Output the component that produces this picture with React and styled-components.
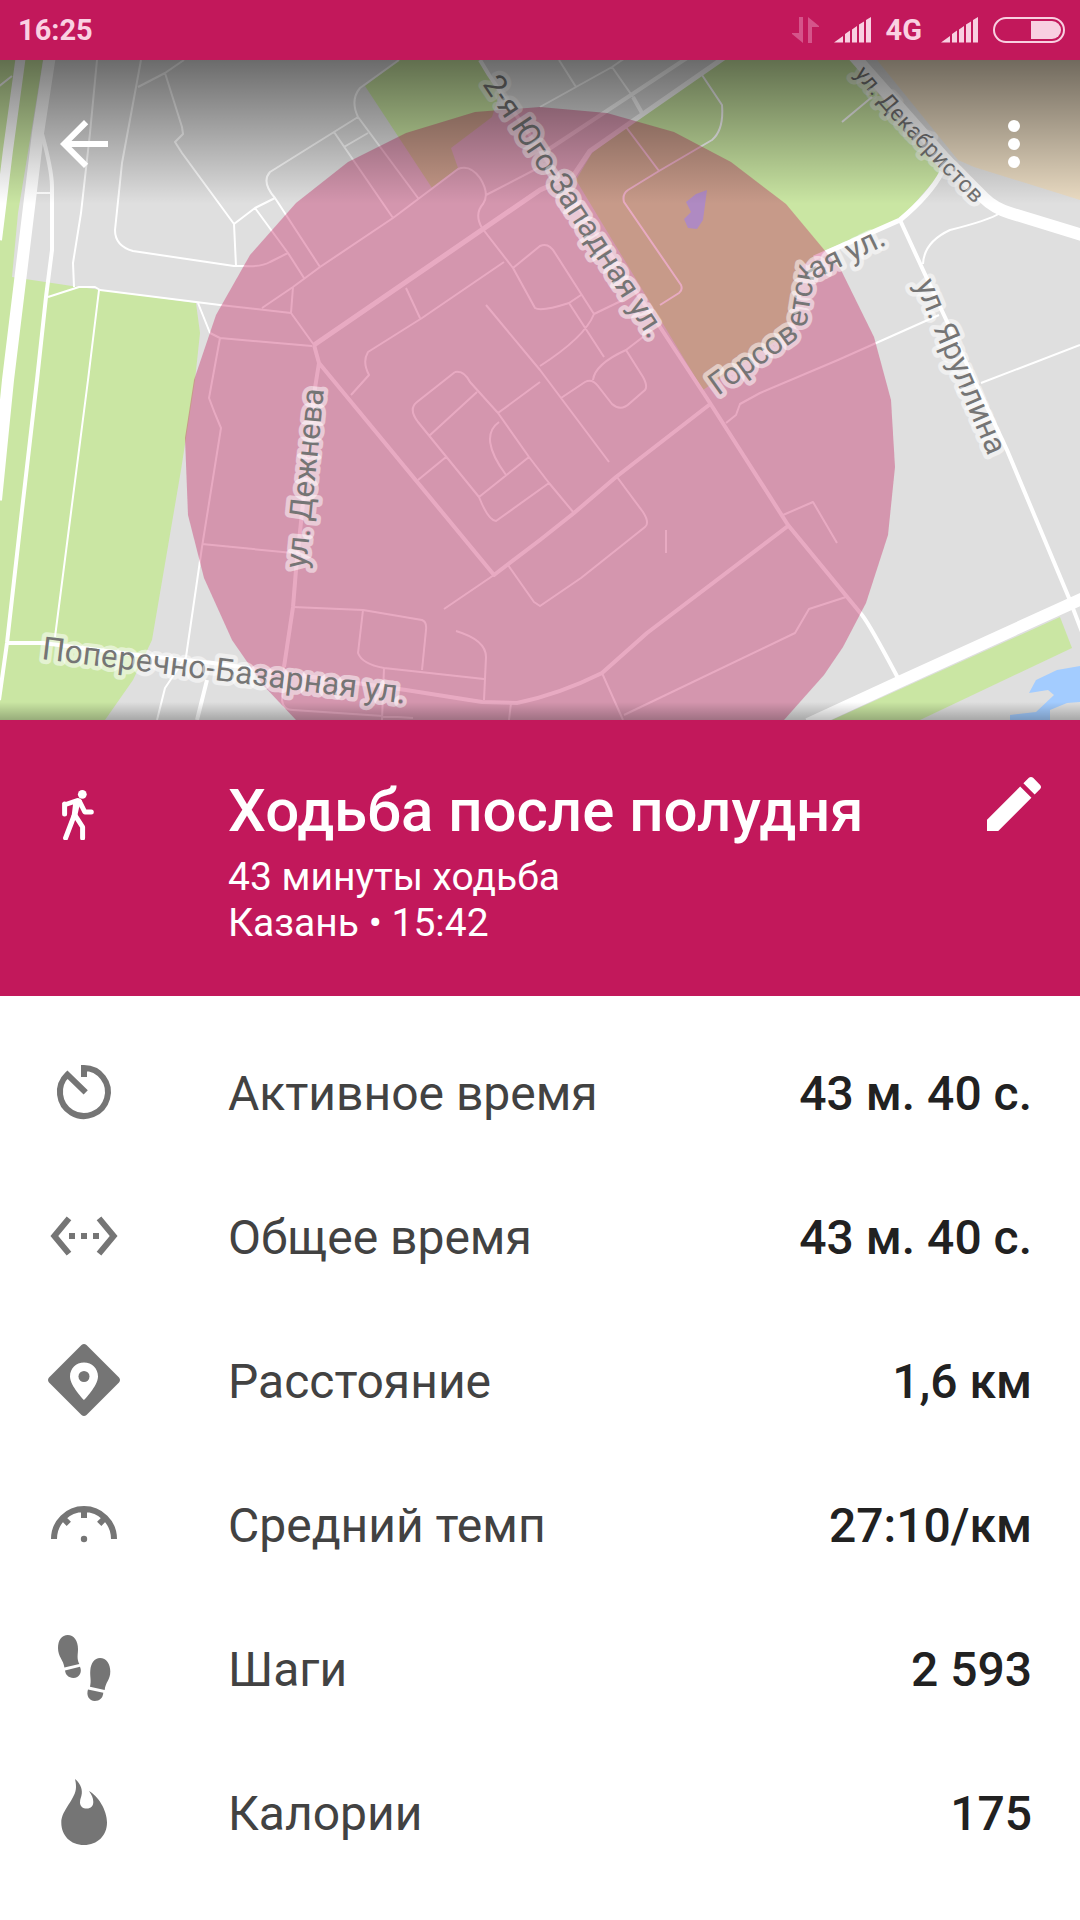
import React from 'react';
import styled, { createGlobalStyle } from 'styled-components';

const GlobalStyle = createGlobalStyle`
	* { box-sizing: border-box; }
	body {
		margin: 0;
		background: #fff;
		font-family: Roboto, 'Noto Sans', sans-serif;
	}
`;

const Page = styled.div`
	display: flex;
	flex-direction: column;
	min-height: 100vh;
	background: #fff;
`;

const StatusBar = styled.div`
	display: flex;
	align-items: center;
	justify-content: space-between;
	height: 60px;
	padding: 0 15px 0 18px;
	background: #c2185b;
	color: #fad1e2;
	font-size: 29px;
	font-weight: 700;
	line-height: 36px;
`;

const StatusIcons = styled.div`
	display: flex;
	align-items: center;
	gap: 15px;

	svg { display: block; }
`;

const Network = styled.span`
	padding-right: 4px;
`;

const MapArea = styled.section`
	position: relative;
	overflow: hidden;
`;

const MapCanvas = styled.svg`
	display: block;
	width: 100%;
	height: auto;
`;

const Roads = styled.g`
	fill: none;
	stroke: #fff;
	stroke-linejoin: round;
`;

const StreetLabel = styled.text`
	fill: #757575;
	stroke: rgba(255, 255, 255, .5);
	stroke-width: 9px;
	stroke-linejoin: round;
	paint-order: stroke;
	font-size: ${props => props.$size}px;
`;

const MapToolbar = styled.div`
	position: absolute;
	top: 48px;
	left: 0;
	right: 0;
	display: flex;
	justify-content: space-between;
	padding: 0 30px 0 48px;
`;

const IconButton = styled.button`
	flex: none;
	width: 72px;
	height: 72px;
	padding: 0;
	border: 0;
	background: none;
	color: #fff;
	cursor: pointer;

	svg { display: block; }
`;

const Header = styled.header`
	display: flex;
	align-items: flex-start;
	padding: 48px 30px 48px 48px;
	background: #c2185b;
	color: #fff;

	> svg { flex: none; }
`;

const HeaderText = styled.div`
	flex: 1;
	padding: 8px 0 0 108px;
`;

const Title = styled.h1`
	margin: 0 0 8px;
	font-size: 60px;
	font-weight: 500;
	line-height: 70px;
`;

const Subtitle = styled.p`
	margin: 0;
	font-size: 39px;
	line-height: 46px;

	&:last-child { padding-bottom: 2px; }
`;

const StatList = styled.dl`
	margin: 0;
	padding: 24px 48px 0;
`;

const StatRow = styled.div`
	display: flex;
	align-items: center;
	height: 144px;
	font-size: 48px;
	line-height: 56px;

	svg {
		flex: none;
		color: #757575;
	}
	dt {
		flex: 1;
		padding: 4px 0 0 108px;
		color: #424242;
	}
	dd {
		margin: 0;
		padding-top: 4px;
		color: #212121;
		font-weight: 500;
	}
`;

const Icon = ({ children, viewBox = '0 0 72 72' }) => (
	<svg width='72' height='72' viewBox={viewBox} fill='currentColor' aria-hidden='true'>
		{children}
	</svg>
);

const Signal = () => (
	<svg width='37' height='26' viewBox='0 0 37 26' fill='#f8d0e1' aria-hidden='true'>
		<path d='M0 25.5 L9 19 V25.5 Z M11 25.5 V17 L16 13.5 V25.5 Z M18 25.5 V12.5 L23 9 V25.5 Z M25 25.5 V7.5 L30 4.5 V25.5 Z M32 25.5 V3 L37 0 V25.5 Z' />
	</svg>
);

const DataArrows = () => (
	<svg width='27' height='26' viewBox='0 0 27 26' fill='#d5548a' aria-hidden='true'>
		<path d='M7 0 H11 V26 L0 17 V16 H7 Z M16 26 H20 V10 H27 V9 L16 0 Z' />
	</svg>
);

const Battery = () => (
	<svg width='72' height='26' viewBox='0 0 72 26' aria-hidden='true'>
		<rect x='1' y='1' width='70' height='24' rx='12' fill='none' stroke='#f8d0e1' strokeWidth='2' />
		<path d='M38 4 H59 A9 9 0 0 1 59 22 H38 Z' fill='#f8d0e1' />
	</svg>
);

const TimerIcon = () => (
	<Icon>
		<path d='M36 21 V12 A24 24 0 1 1 19.4 18.6 L37.7 36.4' fill='none' stroke='currentColor' strokeWidth='6' />
	</Icon>
);

const SpanIcon = () => (
	<Icon viewBox='0 0 24 24'>
		<path d='M7.77 6.76 6.23 5.48.82 12l5.41 6.52 1.54-1.28L3.42 12l4.35-5.24zM7 13h2v-2H7v2zm10-2h-2v2h2v-2zm-6 2h2v-2h-2v2zm6.77-7.52-1.54 1.28L20.58 12l-4.35 5.24 1.54 1.28L23.18 12l-5.41-6.52z' />
	</Icon>
);

const DistanceIcon = () => (
	<Icon>
		<path
			fillRule='evenodd'
			d='M33.5 1 Q36 -1 38.5 1 L71 33.5 Q73 36 71 38.5 L38.5 71 Q36 73 33.5 71 L1 38.5 Q-1 36 1 33.5 Z
				M36 18.5 C28 18.5 22 24.5 22 32.5 C22 42 36 56 36 56 C36 56 50 42 50 32.5 C50 24.5 44 18.5 36 18.5 Z'
		/>
		<circle cx='36' cy='32.5' r='5.5' />
	</Icon>
);

const PaceIcon = () => (
	<Icon>
		<path
			d='M6 51 A30 30 0 0 1 66 51 M36 20 V30 M14 29 L20.8 35.8 M58 29 L51.2 35.8'
			fill='none'
			stroke='currentColor'
			strokeWidth='6'
		/>
		<circle cx='36' cy='51' r='3.2' />
	</Icon>
);

const StepsIcon = () => (
	<Icon>
		<path d='M16.4 35.6 C15.6 28 10 25 10 16 C10 8 14 3 19.7 3 C26 3 30 9 30 17 C30 23 28.5 26 31.3 32 Z' />
		<path d='M17 38.6 L32 34.8 C34.4 40 31.5 46 25.3 46 C20.5 46 17.5 43 17 38.6 Z' />
		<path d='M42 54.7 C43.5 48 41.8 45 42.3 38.5 C42.8 31 46.5 26 52 26 C58.5 26 62.3 32 62.3 39.5 C62.3 48 57.5 50 56.7 58 Z' />
		<path d='M40 57.6 L55.3 60.8 C55 66 51.5 69 46.8 69 C41 69 38 63.5 40 57.6 Z' />
	</Icon>
);

const CaloriesIcon = () => (
	<Icon>
		<path d='M27 3 C31 6 34.5 12 33.8 17.5 C33.4 21 32 23 32 26.5 C32 30.3 34.8 32.6 38.8 32.6 C43 32.6 45.3 29.8 45.3 26 C45.3 22 43.5 18.5 41 15 C50 20 59 34 59 46.5 C59 59.5 49.5 69 36 69 C22.5 69 13.3 59.5 13.3 46.5 C13.3 34 28 23 28 11 C28 8 27.6 5.5 27 3 Z' />
	</Icon>
);

const WalkIcon = () => (
	<Icon viewBox='0 -12 72 72'>
		<circle cx='34.3' cy='14.3' r='4.4' />
		<path d='M14 23.2 L28.5 18.2 Q32.5 17.6 34 21 L31 28 L29 37 L23.5 37 L25 24.5 L19 26.5 Z' />
		<path
			d='M16.6 34 V24 M26 36 L17.6 58 M27.5 36 L34.6 47 V58 M31.8 22 L36.8 32 H43.3'
			fill='none'
			stroke='currentColor'
			strokeWidth='5'
			strokeLinecap='round'
			strokeLinejoin='round'
		/>
	</Icon>
);

const parks = [
	'0,60 43,60 18,213 12,277 72,286 196,303 200,333 195,380 181,470 152,640 133,680 105,720 0,720',
	'399,60 365,86 432,188 458,168 451,148 492,117 500,92 489,75 480,60',
	'721,60 851,60 942,172 900,220 826,250 800,267 788,333 703,390 576,180 592,153 643,115',
	'1060,617 1072,648 920,720 832,720'
];

const water = [
	'707,190 703,220 697,229 688,228 684,219 691,212 686,202 696,194',
	'1080,666 1057,670 1036,680 1029,693 1048,690 1054,695 1036,712 1010,715 1010,720 1050,720 1050,710 1067,703 1080,702'
];

const roads = [
	{
		width: 12,
		d: `M50 55 L38 133 L8 380 L-4 500 M853 55 L946 160 L984 198 Q994 208 1010 213 L1082 235
			M1090 595 L899 682 L808 724`
	},
	{ width: 10, d: 'M21 55 L8 150 L-3 240' },
	{
		width: 5,
		d: `M314 345 L540 190 L574 175 L590 151 L643 114 L728 55
			M814 258 L900 220 Q930 195 942 172`
	},
	{
		width: 4,
		d: `M480 60 L489 75 L660 327 L710 403 L788 525 L862 615 Q870 625 899 680
			M900 220 L929 283 L1007 450 L1069 598 L1082 632 M540 155 L690 56
			M41 130 Q52 170 52 187 V250 L46 297 L37 380 L22 510 L7 643 L-1 700
			M314 345 L319 363 L494 575 L540 540 L574 513 L616 477 L709 405
			M319 363 L315 388 L296 570 L293 607 L284 667 M633 97 L642 113
			M7 643 H43 L138 655 L213 663 L406 690 L482 702 L517 703 Q560 694 602 673 L647 633 L788 526
			M207 680 L197 720`
	},
	{
		width: 2,
		d: `M97 60 L90 133 L81 213 L73 263 L74 287 M141 60 L122 163 L115 230 Q115 246 133 251 L234 266 H243 Q262 267 270 262 L288 253
			M184 60 L165 73 L138 87 M165 73 L182 127 L183 134 L175 142 L182 153 L234 224 L236 266
			M234 224 L255 208 L275 198 M255 208 L288 253 L304 278
			M399 60 L360 88 Q350 100 358 117 L418 198 M358 117 L334 132 L270 172 Q261 182 275 198 L320 267
			M334 132 L393 218 M344 147 L368 133
			M262 308 L293 287 L320 267 L393 218 L458 169 Q470 164 480 178 Q490 194 483 204 Q474 214 482 228 L513 268 L535 308 Q541 312 569 303 L581 295
			M486 195 L540 167 M513 268 L540 246 Q549 242 555 253 L594 314 L623 300 M569 303 L604 357
			M660 305 L679 293 Q683 290 681 285 L624 202 Q622 194 628 190 L659 171 L712 140 Q724 130 722 105 L702 75
			M626 127 L659 171 M594 314 Q585 337 540 366
			M504 262 L422 318 L368 352 Q362 362 369 375 L351 395 M406 288 L420 318
			M486 305 L540 370 L561 398 L609 462
			M561 398 L585 382 Q592 378 598 386 L612 404 Q621 412 630 403 L645 390 Q648 386 643 377 L626 350 L643 337 M593 380 Q595 364 626 350
			M455 372 Q464 370 470 382 L498 413 L529 457 L549 483 L574 513
			M455 372 L417 402 Q408 409 418 422 L479 497 Q488 520 496 521 L549 483
			M429 436 L477 392 M418 480 L446 457 M479 497 L529 457 M506 475 Q478 437 499 422 M498 413 L540 382
			M293 287 L291 313 L314 345 M494 575 L444 609
			M508 565 L534 602 L540 606 L581 578 L645 527 Q650 523 643 512 L617 477
			M284 667 L282 700 Q283 710 293 710 L413 718
			M602 673 L623 720 M624 715 L795 633 L809 609 L846 597 M783 515 L813 502 L837 543 M666 530 V553
			M726 423 L736 415 L740 404 L760 393 L838 360 L939 315
			M1000 213 Q990 220 950 230 Q924 242 923 264 M981 383 L1080 345
			M210 333 L220 338 L312 346 M220 338 L209 398 Q214 412 221 428 L202 547 L186 657 L165 688 L157 720
			M198 303 L210 333 M48 297 L79 287 H95 L100 290 L220 305 L291 313 M99 290 L88 380 L55 637
			M202 544 L293 553 M293 607 L363 610 L422 620 Q427 622 426 630 L422 670
			M363 610 L358 653 Q362 664 384 668 L484 679 M384 668 L382 720
			M456 631 Q486 640 486 657 L484 700 M511 703 L509 720
			M540 107 L612 67 L625 58 M612 67 L633 97 M559 60 L576 87 M872 97 L842 122 M36 193 H51 M-2 87 L12 76`
	}
];

// a street that bends sharply gets one baseline for each straight stretch
const labels = [
	{ id: 'yugo', size: 31, parts: [['M482 84 L552 189 L670 372', '2-я Юго-Западная ул.']] },
	{ id: 'dekabristov', size: 23, parts: [['M854 74 Q890 118 920 148 L990 220', 'ул. Декабристов']] },
	{ id: 'yarullina', size: 31, parts: [['M915 284 L935 332 L1005 495', 'ул. Яруллина']] },
	{ id: 'dezhneva', size: 31, parts: [['M306 569 L328 350', 'ул. Дежнева']] },
	{ id: 'bazarnaya', size: 32, parts: [['M41 659 L215 680 L448 709', 'Поперечно-Базарная ул.']] },
	{
		id: 'gorsovetskaya',
		size: 31,
		parts: [
			['M718 396 L814 327', 'Горсов'],
			['M806 328 L820 240', 'етск'],
			['M814 280 L914 231', 'ая ул.']
		]
	}
];

const RouteMap = () => (
	<MapCanvas viewBox='0 60 1080 660' role='img' aria-label='Карта'>
		<defs>
			<linearGradient id='topShade' x1='0' y1='0' x2='0' y2='1'>
				<stop offset='0' stopColor='#000' stopOpacity='.52' />
				<stop offset='1' stopColor='#000' stopOpacity='0' />
			</linearGradient>
			<linearGradient id='bottomShade' x1='0' y1='0' x2='0' y2='1'>
				<stop offset='0' stopColor='#000' stopOpacity='0' />
				<stop offset='1' stopColor='#000' stopOpacity='.25' />
			</linearGradient>
			{labels.map(({ id, parts }) => parts.map(([d], i) => (
				<path key={id + i} id={`${id}-${i}`} d={d} />
			)))}
		</defs>
		<rect y='60' width='1080' height='660' fill='#dfdfdf' />
		<polygon points='877,60 1080,60 1080,200 974,167 958,160' fill='#ebdcc3' />
		{parks.map(points => <polygon key={points} points={points} fill='#cae6a3' />)}
		{water.map(points => <polygon key={points} points={points} fill='#a3ccff' />)}
		<Roads>
			{roads.map(road => <path key={road.width} d={road.d} strokeWidth={road.width} />)}
		</Roads>
		<polygon
			points='540,107 607,113 674,132 731,162 786,204 841,270 874,337 891,400 895,467 888,535 866,603 843,647 824,675 784,720 296,720 263,685 232,640 204,578 188,515 185,438 194,380 216,315 250,255 296,203 348,162 406,133 475,112'
			fill='#c2205f'
			fillOpacity='.38'
		/>
		{labels.map(({ id, size, parts }) => (
			<StreetLabel key={id} $size={size}>
				{parts.map(([, text], i) => (
					<textPath key={text} href={`#${id}-${i}`}>{text}</textPath>
				))}
			</StreetLabel>
		))}
		<rect y='60' width='1080' height='144' fill='url(#topShade)' />
		<rect y='702' width='1080' height='18' fill='url(#bottomShade)' />
	</MapCanvas>
);

const stats = [
	{ label: 'Активное время', value: '43 м. 40 с.', icon: TimerIcon },
	{ label: 'Общее время', value: '43 м. 40 с.', icon: SpanIcon },
	{ label: 'Расстояние', value: '1,6 км', icon: DistanceIcon },
	{ label: 'Средний темп', value: '27:10/км', icon: PaceIcon },
	{ label: 'Шаги', value: '2 593', icon: StepsIcon },
	{ label: 'Калории', value: '175', icon: CaloriesIcon }
];

export default function App() {
	return (
		<Page>
			<GlobalStyle />
			<StatusBar>
				<span>16:25</span>
				<StatusIcons>
					<DataArrows />
					<Signal />
					<Network>4G</Network>
					<Signal />
					<Battery />
				</StatusIcons>
			</StatusBar>
			<MapArea>
				<RouteMap />
				<MapToolbar>
					<IconButton type='button' aria-label='Назад'>
						<Icon viewBox='0 0 24 24'>
							<path d='M20 11H7.83l5.59-5.59L12 4l-8 8 8 8 1.41-1.41L7.83 13H20v-2z' />
						</Icon>
					</IconButton>
					<IconButton type='button' aria-label='Меню'>
						<Icon>
							<circle cx='36' cy='18' r='6' />
							<circle cx='36' cy='36' r='6' />
							<circle cx='36' cy='54' r='6' />
						</Icon>
					</IconButton>
				</MapToolbar>
			</MapArea>
			<Header>
				<WalkIcon />
				<HeaderText>
					<Title>Ходьба после полудня</Title>
					<Subtitle>43 минуты ходьба</Subtitle>
					<Subtitle>Казань • 15:42</Subtitle>
				</HeaderText>
				<IconButton type='button' aria-label='Изменить'>
					<Icon viewBox='0 0 24 24'>
						<path d='M3 17.25V21h3.75L17.81 9.94l-3.75-3.75L3 17.25zM20.71 7.04c.39-.39.39-1.02 0-1.41l-2.34-2.34c-.39-.39-1.02-.39-1.41 0l-1.83 1.83 3.75 3.75 1.83-1.83z' />
					</Icon>
				</IconButton>
			</Header>
			<StatList>
				{stats.map(({ label, value, icon: StatIcon }) => (
					<StatRow key={label}>
						<StatIcon />
						<dt>{label}</dt>
						<dd>{value}</dd>
					</StatRow>
				))}
			</StatList>
		</Page>
	);
}
